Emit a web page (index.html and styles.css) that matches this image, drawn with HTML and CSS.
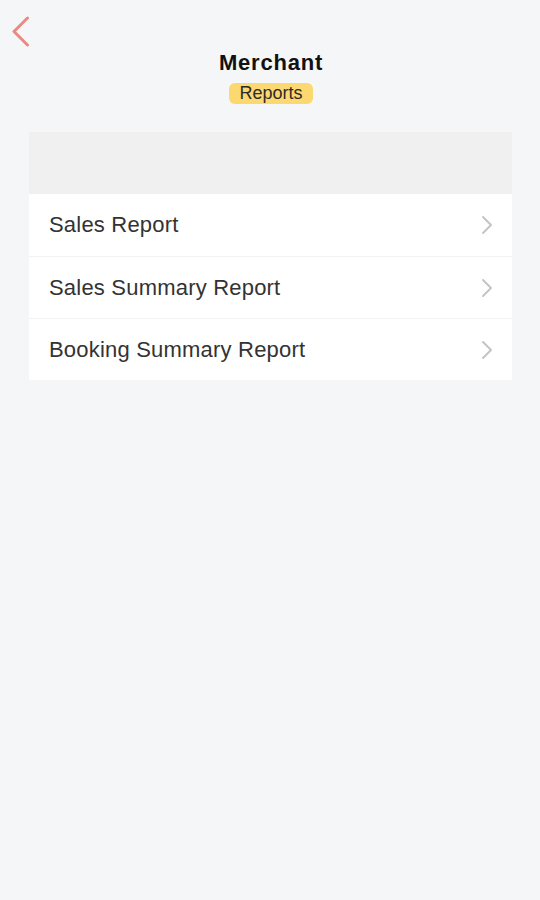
FILE: index.html
```html
<!DOCTYPE html>
<html lang="en">
<head>
<meta charset="utf-8">
<title>Merchant Reports</title>
<link rel="stylesheet" href="styles.css">
</head>
<body>
<div class="page">
  <header class="topbar">
    <button class="back" aria-label="Back">
      <svg width="19" height="31" viewBox="0 0 19 31"><path d="M16.5 2 L3 15.5 L16.5 29" fill="none" stroke="#ea8a82" stroke-width="3" stroke-linecap="round" stroke-linejoin="round"/></svg>
    </button>
    <div class="title-block">
      <div class="title">Merchant</div>
      <span class="badge">Reports</span>
    </div>
  </header>
  <section class="card">
    <div class="card-head"></div>
    <ul class="list">
      <li class="row"><span>Sales Report</span><svg class="chev" width="12" height="20" viewBox="0 0 12 20"><path d="M2 2 L10 10 L2 18" fill="none" stroke="#c4c4c4" stroke-width="2" stroke-linecap="round" stroke-linejoin="round"/></svg></li>
      <li class="row"><span>Sales Summary Report</span><svg class="chev" width="12" height="20" viewBox="0 0 12 20"><path d="M2 2 L10 10 L2 18" fill="none" stroke="#c4c4c4" stroke-width="2" stroke-linecap="round" stroke-linejoin="round"/></svg></li>
      <li class="row"><span>Booking Summary Report</span><svg class="chev" width="12" height="20" viewBox="0 0 12 20"><path d="M2 2 L10 10 L2 18" fill="none" stroke="#c4c4c4" stroke-width="2" stroke-linecap="round" stroke-linejoin="round"/></svg></li>
    </ul>
  </section>
</div>
</body>
</html>
```

FILE: styles.css
```css
* { box-sizing: border-box; }
html, body {
  margin: 0;
  padding: 0;
  background: #f5f6f8;
  font-family: "Liberation Sans", Arial, sans-serif;
  color: #333;
}
.page {
  min-height: 900px;
  display: flex;
  flex-direction: column;
}
.topbar {
  position: relative;
  padding-top: 51px;
  height: 132px;
}
.back {
  position: absolute;
  left: 11px;
  top: 16px;
  padding: 0;
  border: 0;
  background: none;
  display: block;
}
.back svg { display: block; }
.title-block {
  display: flex;
  flex-direction: column;
  align-items: center;
  gap: 8px;
}
.title {
  font-size: 22px;
  font-weight: bold;
  letter-spacing: 0.8px;
  color: #111;
  line-height: 24px;
  padding-left: 2px;
}
.badge {
  background: #fbd870;
  border-radius: 6px;
  font-size: 18px;
  line-height: 21px;
  padding: 0 10px;
  color: #2b2b2b;
  margin-left: 2px;
}
.card {
  margin: 0 28px 0 29px;
  background: #fff;
}
.card-head {
  height: 62px;
  background: #f0f0f0;
}
.list {
  list-style: none;
  margin: 0;
  padding: 0;
}
.row {
  height: 62px;
  display: flex;
  align-items: center;
  justify-content: space-between;
  padding: 0 19px 0 20px;
  font-size: 22px;
  letter-spacing: 0.2px;
  color: #333;
  border-top: 1px solid #f2f2f2;
}
.row:first-child { border-top: 0; }
.chev { display: block; }
```
